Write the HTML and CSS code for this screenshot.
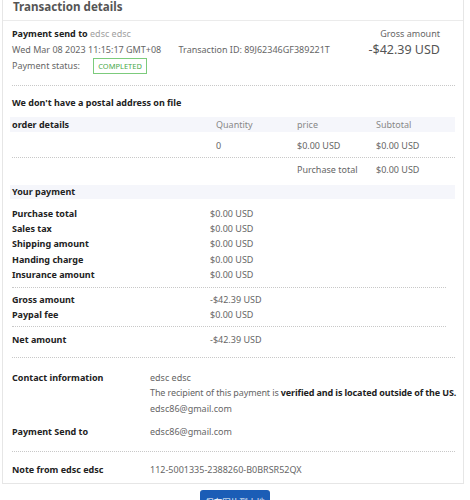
FILE: index.html
```html
<!DOCTYPE html>
<html lang="en">
<head>
<meta charset="UTF-8">
<meta name="viewport" content="width=device-width, initial-scale=1.0">
<title>Transaction details</title>
<link rel="stylesheet" href="styles.css">
</head>
<body>

<div class="card">
  <div class="card-title">Transaction details</div>

  <div class="summary">
    <div class="summary-left">
      <div class="line"><b>Payment send to</b> <span class="muted">edsc edsc</span></div>
      <div class="line">Wed Mar 08 2023 11:15:17 GMT+08 <span class="txn">Transaction ID: 89J62346GF389221T</span></div>
      <div class="line">Payment status: <span class="badge">COMPLETED</span></div>
    </div>
    <div class="summary-right">
      <div class="line">Gross amount</div>
      <div class="amount">-$42.39 USD</div>
    </div>
  </div>

  <div class="content">
    <div class="notice">We don't have a postal address on file</div>

    <div class="order-head">
      <b>order details</b>
      <span>Quantity</span>
      <span>price</span>
      <span>Subtotal</span>
    </div>
    <div class="order-row">
      <span></span>
      <span>0</span>
      <span>$0.00 USD</span>
      <span>$0.00 USD</span>
    </div>
    <div class="order-total">
      <span></span>
      <span></span>
      <span>Purchase total</span>
      <span>$0.00 USD</span>
    </div>

    <div class="bar">Your payment</div>

    <div class="pay-group first">
      <div class="pay-row"><b>Purchase total</b><span>$0.00 USD</span></div>
      <div class="pay-row"><b>Sales tax</b><span>$0.00 USD</span></div>
      <div class="pay-row"><b>Shipping amount</b><span>$0.00 USD</span></div>
      <div class="pay-row"><b>Handing charge</b><span>$0.00 USD</span></div>
      <div class="pay-row"><b>Insurance amount</b><span>$0.00 USD</span></div>
    </div>
    <div class="pay-group second">
      <div class="pay-row"><b>Gross amount</b><span>-$42.39 USD</span></div>
      <div class="pay-row"><b>Paypal fee</b><span>$0.00 USD</span></div>
    </div>
    <div class="pay-group net">
      <div class="pay-row"><b>Net amount</b><span>-$42.39 USD</span></div>
    </div>

    <div class="info-group contact">
      <div class="info-row">
        <b>Contact information</b>
        <div>
          <div>edsc edsc</div>
          <div class="verified">The recipient of this payment is <b>verified and is located outside of the US.</b></div>
          <div>edsc86@gmail.com</div>
        </div>
      </div>
      <div class="info-row send">
        <b>Payment Send to</b>
        <div>edsc86@gmail.com</div>
      </div>
    </div>
    <div class="info-group note">
      <div class="info-row">
        <b>Note from edsc edsc</b>
        <div>112-5001335-2388260-B0BRSR52QX</div>
      </div>
    </div>
  </div>
</div>

<div class="actions">
  <button class="save-btn">保存图片到本地</button>
</div>

</body>
</html>
```

FILE: styles.css
```css
body {
  margin: 0;
  padding: 0;
  font-family: 'Noto Sans', 'Noto Sans CJK SC', sans-serif;
  font-size: 9px;
  color: #666;
  background: #fff;
}

b {
  color: #222;
}

.card {
  margin: 0 6px 0 2px;
  border: 1px solid #e6e6e6;
  border-top: 0;
  padding-bottom: 6px;
}

.card-title {
  height: 20px;
  padding: 0 10px;
  font-size: 11.6px;
  font-weight: bold;
  line-height: 14px;
  color: #555;
  border-bottom: 1px solid #ebebeb;
}

/* top block: who, when, status and the big amount */
.summary {
  display: flex;
  justify-content: space-between;
  margin: 0 8px 0 9px;
  padding: 5px 0 11px;
  border-bottom: 1px dotted #c8c8c8;
}

.line {
  line-height: 16px;
}

.muted {
  color: #a0a0a0;
}

.txn {
  margin-left: 15px;
}

.badge {
  display: inline-block;
  margin-left: 11px;
  padding: 0 4px;
  line-height: 14px;
  font-size: 7.5px;
  color: #49a94b;
  border: 1px solid #7ccb7c;
  vertical-align: top;
}

.summary-right {
  text-align: right;
  padding-right: 15px;
}

.amount {
  font-size: 12.5px;
  line-height: 15px;
  color: #555;
}

.content {
  margin: 0 8px 0 9px;
}

.notice {
  margin: 9px 0 6px;
  line-height: 16px;
  font-weight: bold;
  color: #222;
}

.order-head,
.order-row,
.order-total {
  display: grid;
  grid-template-columns: 204px 81px 79px 1fr;
}

.order-head {
  margin-left: -2px;
  padding-left: 2px;
  line-height: 15px;
  background: #f5f6fb;
  color: #888;
}

.order-row {
  padding: 6px 0 3px;
  line-height: 16px;
  border-bottom: 1px dotted #c8c8c8;
}

.order-total {
  padding-top: 4px;
  line-height: 16px;
  margin-bottom: 7px;
}

.bar {
  margin-left: -2px;
  padding-left: 2px;
  line-height: 14px;
  background: #f5f6fb;
  font-weight: bold;
  color: #222;
}

/* payment breakdown */
.pay-group {
  border-bottom: 1px dotted #c8c8c8;
}

.pay-group.first {
  padding: 7px 0 5px;
  margin-right: 9px;
}

.pay-group.second {
  padding: 4px 0 4px;
  margin-right: 9px;
}

.pay-group.net {
  padding: 5px 0 9px;
}

.pay-row {
  display: grid;
  grid-template-columns: 198px 1fr;
  line-height: 15.2px;
}

/* contact + note */
.info-group {
  border-bottom: 1px dotted #c8c8c8;
}

.info-group.contact {
  padding: 12px 0 11px;
}

.info-group.note {
  padding-top: 10px;
  border-bottom: 0;
}

.info-row {
  display: grid;
  grid-template-columns: 138px 1fr;
  line-height: 15.5px;
}

.info-row.send {
  margin-top: 8px;
}

.verified {
  white-space: nowrap;
  letter-spacing: -0.12px;
}

.actions {
  text-align: center;
  margin-top: 6px;
}

.save-btn {
  width: 70px;
  height: 22px;
  padding: 0;
  border: 0;
  border-radius: 3px;
  background: #1b5db6;
  color: #fff;
  font-family: 'Noto Sans CJK SC', sans-serif;
  font-size: 8.5px;
  cursor: pointer;
}
```
